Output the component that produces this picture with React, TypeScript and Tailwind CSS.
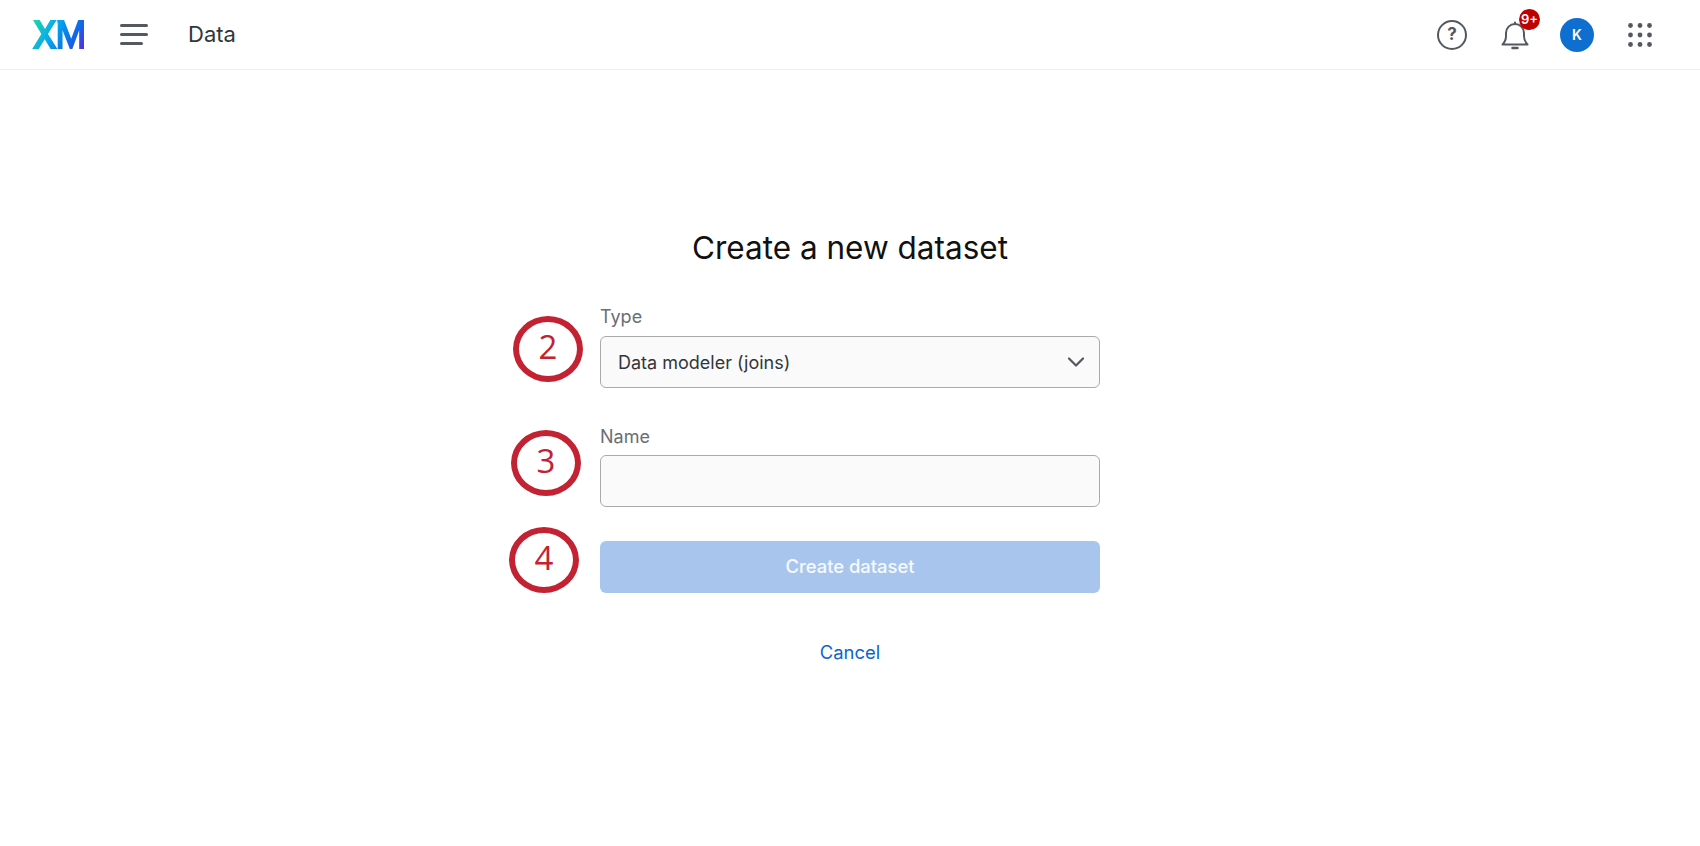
import { ChevronDown } from "lucide-react";

function XmLogo() {
  return (
    <svg width="52" height="29" viewBox="0 0 54 30" preserveAspectRatio="none" fill="none">
      <defs>
        <linearGradient id="xm" x1="0" y1="0" x2="54" y2="30" gradientUnits="userSpaceOnUse">
          <stop offset="0" stopColor="#21dba4" />
          <stop offset="0.4" stopColor="#07a8ef" />
          <stop offset="0.72" stopColor="#0b6fe8" />
          <stop offset="1" stopColor="#5a2be0" />
        </linearGradient>
      </defs>
      <path
        d="M1 0h7l5.5 9.2L19 0h6.6l-9 14.4L26.4 30h-7.1l-6.1-10L7 30H0.2l9.5-15.4L1 0z"
        fill="url(#xm)"
      />
      <path
        d="M26 0h7.3l7.4 19.5L48 0h6v30h-5V10.5L41.9 30h-2.6L31.7 10.5V30h-5V4z"
        fill="url(#xm)"
      />
    </svg>
  );
}

function Annotation({ n, className }: { n: number; className: string }) {
  return (
    <div
      className={`absolute flex h-[66px] w-[70px] items-center justify-center rounded-[50%] border-[6px] border-[#c32232] pb-[6px] text-[33px] font-medium leading-none text-[#c32232] font-['Open_Sans',sans-serif] ${className}`}
    >
      {n}
    </div>
  );
}

function AppsGrid() {
  return (
    <svg width="24" height="24" viewBox="0 0 24 24" fill="#54585f">
      {[2.5, 12, 21.5].map((y) =>
        [2.5, 12, 21.5].map((x) => <circle key={`${x}-${y}`} cx={x} cy={y} r="2.4" />)
      )}
    </svg>
  );
}

export default function App() {
  return (
    <div className="flex min-h-[846px] flex-col bg-white font-['Inter',sans-serif] text-[#32363a]">
      <header className="flex h-[70px] items-center border-b border-[#eeeeee] pl-8 pr-12">
        <XmLogo />
        <div className="ml-[36px] flex w-[28px] flex-col gap-[6px]">
          <span className="h-[3px] w-[28px] rounded-full bg-[#54585f]" />
          <span className="h-[3px] w-[28px] rounded-full bg-[#54585f]" />
          <span className="h-[3px] w-[23px] rounded-full bg-[#54585f]" />
        </div>
        <span className="ml-[40px] text-[22px]">Data</span>
        <div className="ml-auto flex items-center">
          <div className="flex h-[30px] w-[30px] items-center justify-center rounded-full border-2 border-[#54585f] text-[17px] font-bold leading-none text-[#54585f]">
            ?
          </div>
          <div className="relative ml-[33px] h-[30px] w-[30px]">
            <svg width="30" height="30" viewBox="0 0 30 30" fill="none" stroke="#54585f" strokeWidth="2" strokeLinejoin="round">
              <path d="M2.5 24.5c2-2 3.5-4 3.5-8.5v-3c0-5 4-9 9-9s9 4 9 9v3c0 4.500 1.500 6.500 3.500 8.500z" />
              <path d="M12.500 28h5" strokeLinecap="round" strokeWidth="2.500" />
              <path d="M14 3h2" strokeWidth="2.500" />
            </svg>
            <span className="absolute -top-[11px] left-[19px] flex h-[21px] w-[21px] items-center justify-center rounded-full bg-[#bd0000] text-[13px] font-semibold leading-none text-white">
              9+
            </span>
          </div>
          <div className="ml-[30px] flex h-[34px] w-[34px] items-center justify-center rounded-full bg-[#0f6fd1] text-[14px] font-semibold text-white">
            K
          </div>
          <div className="ml-[34px]">
            <AppsGrid />
          </div>
        </div>
      </header>

      <main className="flex flex-col items-center pt-[155px]">
        <h1 className="text-[31.5px] font-normal leading-[46px] text-[#111111]">Create a new dataset</h1>

        <div className="relative mt-[34px] flex w-[500px] flex-col">
          <Annotation n={2} className="-left-[87px] top-[11px]" />
          <Annotation n={3} className="-left-[89px] top-[125px]" />
          <Annotation n={4} className="-left-[91px] top-[222px]" />

          <label className="text-[18px] leading-[24px] text-[#6a6e73]">Type</label>
          <button className="mt-[7px] flex h-[52px] w-full items-center justify-between rounded-[6px] border border-[#aaaaaa] bg-[#fafafa] pl-[17px] pr-[9px] text-[18px] text-[#32363a]">
            Data modeler (joins)
            <ChevronDown size={28} strokeWidth={1.9} color="#54585f" />
          </button>

          <label className="mt-[37px] text-[18px] leading-[24px] text-[#6a6e73]">Name</label>
          <input className="mt-[6px] h-[52px] w-full rounded-[6px] border border-[#aaaaaa] bg-[#fafafa] px-[17px]" />

          <button className="mt-[34px] flex h-[52px] w-full items-center justify-center rounded-[6px] bg-[#a8c6ed] text-[18.4px] font-medium text-white/90">
            Create dataset
          </button>

          <a className="mt-[47px] self-center text-[18.4px] leading-[24px] text-[#0a66cf]">Cancel</a>
        </div>
      </main>
    </div>
  );
}
